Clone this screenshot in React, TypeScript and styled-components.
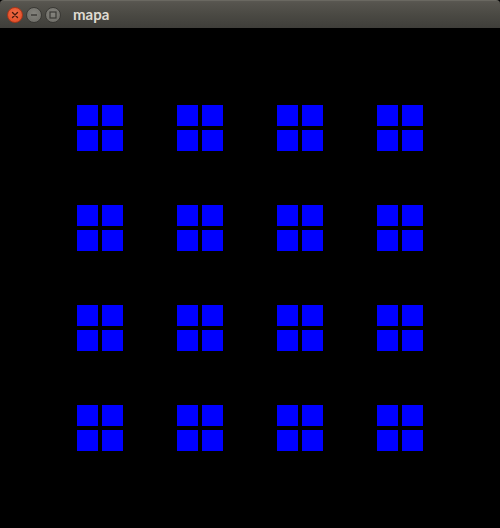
import React from "react";
import styled, { createGlobalStyle } from "styled-components";

const Global = createGlobalStyle`
  html, body { margin: 0; padding: 0; background: #000; }
  body { width: 500px; height: 528px; overflow: hidden; }
`;

const Window = styled.div`
  width: 500px;
  height: 528px;
  display: flex;
  flex-direction: column;
  background: #000;
`;

const TitleBar = styled.div`
  height: 28px;
  flex: 0 0 28px;
  box-sizing: border-box;
  display: flex;
  align-items: center;
  padding-left: 7px;
  background: linear-gradient(#5a5852 0px, #56544e 2px, #4a4943 14px, #3e3d39 28px);
  border-top: 1px solid #6a6861;
  border-radius: 4px 4px 0 0;
`;

const Buttons = styled.div`
  display: flex;
  gap: 3px;
  align-items: center;
`;

const WinButton = styled.div<{ $close?: boolean }>`
  width: 16px;
  height: 16px;
  border-radius: 50%;
  box-sizing: border-box;
  display: flex;
  align-items: center;
  justify-content: center;
  background: ${(p) =>
    p.$close
      ? "radial-gradient(circle at 50% 40%, #f2704a, #e0461f)"
      : "radial-gradient(circle at 50% 40%, #84837d, #6b6a64)"};
  border: 1px solid ${(p) => (p.$close ? "#a8361a" : "#3a3935")};
`;

const Title = styled.span`
  margin-left: 12px;
  font-family: "Lato", "DejaVu Sans", sans-serif;
  font-weight: 700;
  font-size: 15px;
  color: #dfdbd2;
  line-height: 1;
  margin-top: -1px;
`;

const Canvas = styled.div`
  flex: 1;
  background: #000;
  padding: 77px 0 0 77px;
  display: grid;
  grid-template-columns: repeat(4, 46px);
  grid-auto-rows: 46px;
  column-gap: 54px;
  row-gap: 54px;
  align-content: start;
`;

const Tile = styled.div`
  display: grid;
  grid-template-columns: 21px 21px;
  grid-template-rows: 21px 21px;
  gap: 4px;
`;

const Square = styled.div`
  background: #0000ff;
`;

export default function App() {
  const tiles = Array.from({ length: 16 });
  return (
    <>
      <Global />
      <Window>
        <TitleBar>
          <Buttons>
            <WinButton $close>
              <svg width="8" height="8" viewBox="0 0 8 8">
                <path d="M1.5 1.5 L6.5 6.5 M6.5 1.5 L1.5 6.5" stroke="#4a1a0c" strokeWidth="1.4" strokeLinecap="round" />
              </svg>
            </WinButton>
            <WinButton>
              <svg width="8" height="8" viewBox="0 0 8 8">
                <path d="M1 4 H7" stroke="#3a3935" strokeWidth="1.4" />
              </svg>
            </WinButton>
            <WinButton>
              <svg width="8" height="8" viewBox="0 0 8 8">
                <rect x="1" y="1" width="6" height="6" fill="none" stroke="#3a3935" strokeWidth="1.2" />
              </svg>
            </WinButton>
          </Buttons>
          <Title>mapa</Title>
        </TitleBar>
        <Canvas>
          {tiles.map((_, i) => (
            <Tile key={i}>
              <Square />
              <Square />
              <Square />
              <Square />
            </Tile>
          ))}
        </Canvas>
      </Window>
    </>
  );
}
